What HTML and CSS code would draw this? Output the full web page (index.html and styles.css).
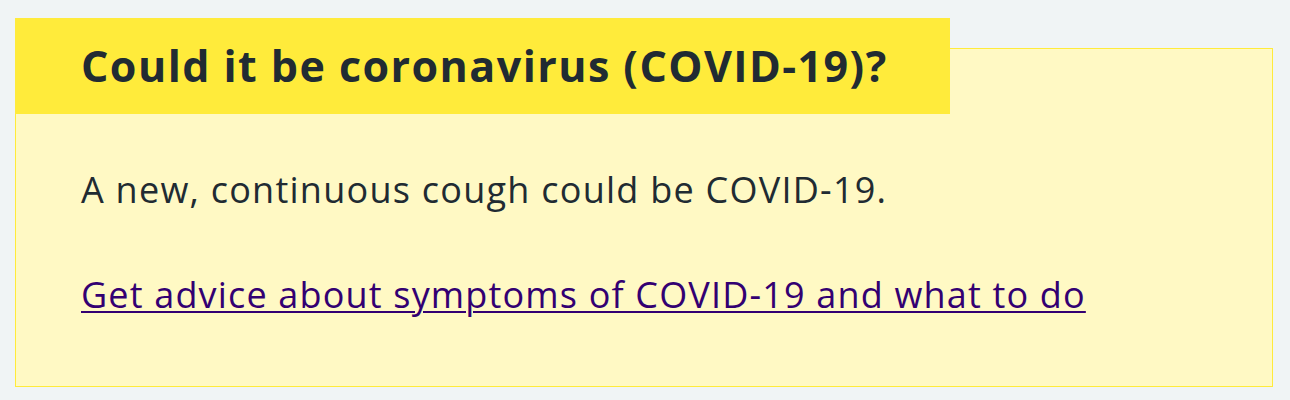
FILE: index.html
```html
<!DOCTYPE html>
<html lang="en">
<head>
<meta charset="utf-8">
<title>Could it be coronavirus (COVID-19)?</title>
<link rel="stylesheet" href="styles.css">
</head>
<body>
<main class="page">
  <section class="callout">
    <h3 class="callout__label">Could it be coronavirus (COVID-19)?</h3>
    <p class="callout__text">A new, continuous cough could be COVID-19.</p>
    <p class="callout__text"><a class="callout__link" href="#">Get advice about symptoms of COVID-19 and what to do</a></p>
  </section>
</main>
</body>
</html>
```

FILE: styles.css
```css
html, body {
  margin: 0;
  padding: 0;
  background: #f0f4f5;
}

.page {
  padding: 18px 17px 0 15px;
  font-family: "Open Sans", "Noto Sans", sans-serif;
  color: #212b32;
}

.callout {
  margin-top: 30px;
  border: 1px solid #ffeb3b;
  background: #fff9c4;
  padding: 0 40px 46px 65px;
  height: 291px;
  box-sizing: content-box;
}

.callout__label {
  display: inline-block;
  margin: -31px 0 0 -66px;
  padding: 0 62px 0 66px;
  height: 96px;
  line-height: 96px;
  background: #ffeb3b;
  font-size: 43px;
  font-weight: 700;
  letter-spacing: 1.45px;
  white-space: nowrap;
}

.callout__text {
  margin: 0;
  font-size: 36px;
  line-height: 52px;
  letter-spacing: 1.25px;
}

.callout__text + .callout__text {
  margin-top: 53px;
}

.callout__text:first-of-type {
  margin-top: 50px;
}

.callout__link {
  color: #330072;
  letter-spacing: 1.17px;
  text-decoration: underline;
  text-decoration-thickness: 2px;
  text-underline-offset: 3px;
}
```
